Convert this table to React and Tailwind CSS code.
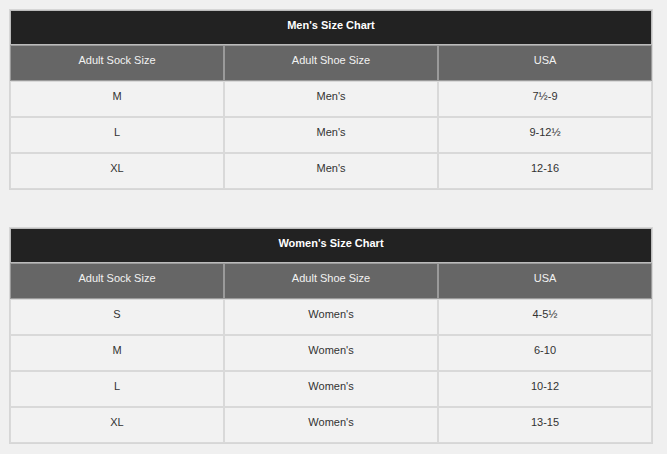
import React from 'react';

const charts = [
    {
        title: "Men's Size Chart",
        rows: [
            ['M', "Men's", '7½-9'],
            ['L', "Men's", '9-12½'],
            ['XL', "Men's", '12-16'],
        ],
    },
    {
        title: "Women's Size Chart",
        rows: [
            ['S', "Women's", '4-5½'],
            ['M', "Women's", '6-10'],
            ['L', "Women's", '10-12'],
            ['XL', "Women's", '13-15'],
        ],
    },
];

const SizeChart = ({ title, rows }) => {
    return (
        <table className="w-[644px] table-fixed border-separate border-spacing-0 border border-[#d6d6d6] text-[11px]">
            <thead>
                <tr>
                    <th colSpan={3} className="h-[35px] pb-[4px] bg-[#222222] text-white font-bold border border-[#bbbbbb]">
                        {title}
                    </th>
                </tr>
                <tr>
                    <th className="h-[36px] w-1/3 pb-[5px] bg-[#666666] text-[#f2f2f2] font-normal border border-[#9a9a9a]">Adult Sock Size</th>
                    <th className="h-[36px] w-1/3 pb-[5px] bg-[#666666] text-[#f2f2f2] font-normal border border-[#9a9a9a]">Adult Shoe Size</th>
                    <th className="h-[36px] w-1/3 pb-[5px] bg-[#666666] text-[#f2f2f2] font-normal border border-[#9a9a9a]">USA</th>
                </tr>
            </thead>
            <tbody>
                {rows.map((row, i) => (
                    <tr key={i}>
                        {row.map((cell, j) => (
                            <td key={j} className="h-[36px] pb-[6px] bg-[#f2f2f2] text-[#333333] text-center border border-[#d9d9d9]">
                                {cell}
                            </td>
                        ))}
                    </tr>
                ))}
            </tbody>
        </table>
    );
};

const App = () => {
    return (
        <div className="min-h-[454px] bg-[#f0f0f0] pt-[9px] pl-[9px] font-['Liberation_Sans',Arial,sans-serif]">
            <div className="flex flex-col gap-[37px]">
                {charts.map((c) => (
                    <SizeChart key={c.title} title={c.title} rows={c.rows} />
                ))}
            </div>
        </div>
    );
};

export default App;
